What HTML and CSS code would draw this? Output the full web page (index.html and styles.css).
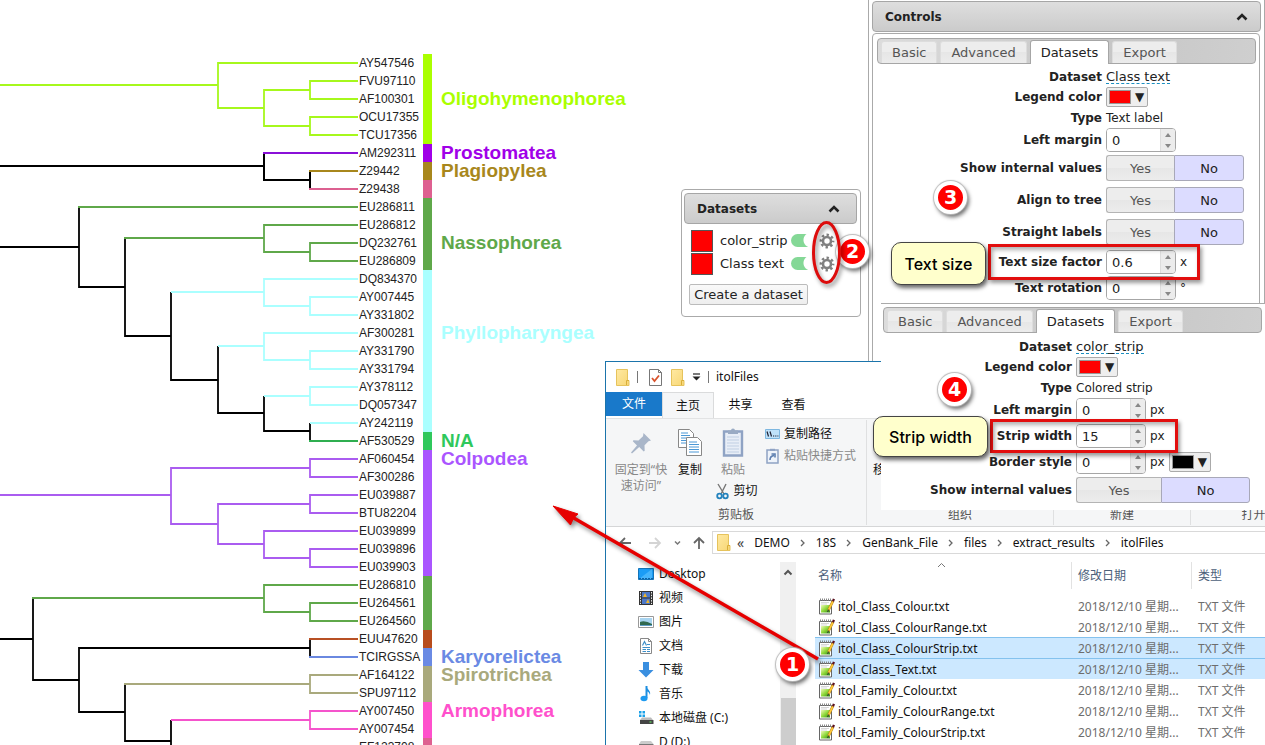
FILE: index.html
```html
<!DOCTYPE html>
<html lang="zh-CN">
<head>
<meta charset="utf-8">
<title>iTOL datasets</title>
<link rel="stylesheet" href="styles.css">
</head>
<body>
<svg class="defs" aria-hidden="true">
  <defs>
    <linearGradient id="gold" x1="0" y1="0" x2="1" y2="1"><stop offset="0" stop-color="#ffe9a2"/><stop offset="1" stop-color="#f7d674"/></linearGradient>
    <linearGradient id="leaf" x1="0" y1="0" x2="1" y2="1"><stop offset="0" stop-color="#eefab8"/><stop offset=".5" stop-color="#8fd83a"/><stop offset="1" stop-color="#2f8f14"/></linearGradient>
    <symbol id="folder" viewBox="0 0 14 17"><path d="M.5.5h11v11h1.500v5H.5z" fill="url(#gold)" stroke="#e6c35c"/><path d="M10.500 16v-4.500h2.500" fill="none" stroke="#d9ae3a"/></symbol>
    <symbol id="gear" viewBox="0 0 16 16"><circle cx="8" cy="8" r="4" fill="none" stroke="#808080" stroke-width="2.600"/><circle cx="8" cy="8" r="6.200" fill="none" stroke="#808080" stroke-width="2.400" stroke-dasharray="2.435" stroke-dashoffset="1.218"/></symbol>
    <symbol id="note" viewBox="0 0 17 17"><path d="M1.500 2.500h12v13.500h-12z" fill="#fff" stroke="#666"/><path d="M3 7h9v7.500H3z" fill="url(#leaf)"/><path d="M2 1.500h11" stroke="#888" stroke-width="2" stroke-dasharray="1 1"/><path d="M3 4.500h8M3 6h6" stroke="#ccc" stroke-width=".8"/><path d="M15 3l-4.500 9" stroke="#a87a10" stroke-width="2.600"/><path d="M15 3l-4.500 9" stroke="#ffc83a" stroke-width="1.700"/><path d="M15.900.8l-.9 2.500" stroke="#5a0f1c" stroke-width="2.200"/><path d="M10.600 11.500l-1 2.500" stroke="#333"/></symbol>
    <symbol id="chev" viewBox="0 0 12 8"><path d="M1.500 6.500L6 2l4.500 4.500" fill="none" stroke="#222" stroke-width="2.600"/></symbol>
    <symbol id="next" viewBox="0 0 6 8"><path d="M1 1l3 3-3 3" fill="none" stroke="#666" stroke-width="1.300"/></symbol>
  </defs>
</svg>
<main class="canvas">

  <section class="tree" aria-label="Phylogenetic tree">
    <svg class="branches" viewBox="0 1 358 702" width="358" height="702">
      <g fill="none" stroke-width="1.800">
        <g stroke="#000">
          <path stroke-width="2" d="M0 113H264M264 100V127H310M310 118V136"/>
          <path d="M0 194H79M79 154V234H125M125 185V283H171M171 239V327H218M218 293V360H264M264 343V378H310M310 370V388"/>
          <path d="M0 586H33M33 545V627H79M310 595H79V659H125M310 586V604M125 631V688H171M171 667V702"/>
        </g>
        <path stroke="#a6f81c" d="M0 32H218M358 10H218V55H264M310 37H264V73H310M358 28H310V46H358M358 64H310V82H358"/>
        <path stroke="#8a10d8" d="M263 100H358"/>
        <path stroke="#a8871c" d="M309 118H358"/>
        <path stroke="#dc6090" d="M309 136H358"/>
        <path stroke="#5fa84a" d="M78 154H358M124 185H264M358 172H264V199H310M358 190H310V208H358M32 545H264M358 532H264V559H310M358 550H310V568H358"/>
        <path stroke="#aaffff" d="M171 239H264M358 226H264V253H310M358 244H310V262H358M218 293H264M358 280H264V307H310M358 298H310V316H358M264 343H310M358 334H310V352H358M310 370H358"/>
        <path stroke="#2fae50" d="M309 388H358"/>
        <path stroke="#aa5cf0" d="M0 442H171M310 415H171V471H218M358 406H310V424H358M310 451H218V491H264M358 442H310V460H358M358 478H264V505H310M358 496H310V514H358"/>
        <path stroke="#b85024" d="M309 586H358"/>
        <path stroke="#6a88e0" d="M309 604H358"/>
        <path stroke="#a9a97c" d="M124 631H310M358 622H310V640H358"/>
        <path stroke="#f554cc" d="M171 667H310M358 658H310V676H358"/>
      </g>
    </svg>
    <ul class="leaves">
      <li>AY547546</li><li>FVU97110</li><li>AF100301</li><li>OCU17355</li><li>TCU17356</li><li>AM292311</li><li>Z29442</li><li>Z29438</li><li>EU286811</li><li>EU286812</li><li>DQ232761</li><li>EU286809</li><li>DQ834370</li><li>AY007445</li><li>AY331802</li><li>AF300281</li><li>AY331790</li><li>AY331794</li><li>AY378112</li><li>DQ057347</li><li>AY242119</li><li>AF530529</li><li>AF060454</li><li>AF300286</li><li>EU039887</li><li>BTU82204</li><li>EU039899</li><li>EU039896</li><li>EU039903</li><li>EU286810</li><li>EU264561</li><li>EU264560</li><li>EUU47620</li><li>TCIRGSSA</li><li>AF164122</li><li>SPU97112</li><li>AY007450</li><li>AY007454</li><li>EF123708</li>
    </ul>
    <ul class="classes">
      <li class="n5 lime">Oligohymenophorea</li>
      <li class="n1 violet">Prostomatea</li>
      <li class="n1 ochre">Plagiopylea</li>
      <li class="n1 rose"></li>
      <li class="n4 green"><span class="half-down">Nassophorea</span></li>
      <li class="n9 cyan"><span class="half-up">Phyllopharyngea</span></li>
      <li class="n1 emerald">N/A</li>
      <li class="n7 purple"><span class="first">Colpodea</span></li>
      <li class="n3 green"></li>
      <li class="n1 rust"></li>
      <li class="n1 blue">Karyorelictea</li>
      <li class="n2 khaki"><span class="first">Spirotrichea</span></li>
      <li class="n2 pink"><span class="first">Armophorea</span></li>
      <li class="n1 rose"></li>
    </ul>
  </section>

  <section class="controls" aria-label="Controls">
    <header class="bar"><h2>Controls</h2><svg class="caret"><use href="#chev"/></svg></header>
    <div class="controls-body">
      <nav class="tabs"><button>Basic</button><button>Advanced</button><button class="active">Datasets</button><button>Export</button></nav>
      <form class="form">
        <div class="row"><span class="label">Dataset</span><a href="#" class="edit">Class text</a></div>
        <div class="row low"><span class="label">Legend color</span><button type="button" class="picker" aria-label="Legend color"><i class="red"></i>▼</button></div>
        <div class="row low type"><span class="label">Type</span><span>Text label</span></div>
        <div class="row spin"><label for="lm1">Left margin</label><span class="spinner"><input id="lm1" value="0"><span class="arrows"><button type="button" class="up" aria-label="Up"></button><button type="button" class="down" aria-label="Down"></button></span></span></div>
        <div class="row tog"><span class="label">Show internal values</span><span class="choice"><button type="button">Yes</button><button type="button" class="on">No</button></span></div>
        <div class="row tog"><span class="label">Align to tree</span><span class="choice"><button type="button">Yes</button><button type="button" class="on">No</button></span></div>
        <div class="row tog"><span class="label">Straight labels</span><span class="choice"><button type="button">Yes</button><button type="button" class="on">No</button></span></div>
        <div class="row spin"><label for="tsf">Text size factor</label><span class="spinner"><input id="tsf" value="0.6"><span class="arrows"><button type="button" class="up" aria-label="Up"></button><button type="button" class="down" aria-label="Down"></button></span></span><span>x</span></div>
        <div class="row spin"><label for="rot">Text rotation</label><span class="spinner"><input id="rot" value="0"><span class="arrows"><button type="button" class="up" aria-label="Up"></button><button type="button" class="down" aria-label="Down"></button></span></span><span>°</span></div>
      </form>
    </div>
  </section>

  <section class="datasets" aria-label="Datasets">
    <header class="bar"><h2>Datasets</h2><svg class="caret"><use href="#chev"/></svg></header>
    <ul>
      <li><i class="swatch"></i><label for="d1">color_strip</label><input type="checkbox" id="d1" checked><button aria-label="Settings"><svg><use href="#gear"/></svg></button></li>
      <li><i class="swatch"></i><label for="d2">Class text</label><input type="checkbox" id="d2" checked><button aria-label="Settings"><svg><use href="#gear"/></svg></button></li>
    </ul>
    <button class="create">Create a dataset</button>
  </section>

  <section class="explorer" aria-label="itolFiles">
    <header class="title">
      <svg width="14" height="17"><use href="#folder"/></svg><i class="bar-sep"></i>
      <svg class="check" width="13" height="17" viewBox="0 0 13 17"><path d="M.5.5h9l3 3v13H.5z" fill="#fff" stroke="#777"/><path d="M9.500.5v3h3" fill="none" stroke="#777"/><path d="M3 9l2.500 3L10 6.500" fill="none" stroke="#d9532c" stroke-width="1.800"/></svg>
      <svg width="14" height="17"><use href="#folder"/></svg>
      <svg width="9" height="8" viewBox="0 0 9 8"><path d="M1 1h7" stroke="#222" stroke-width="1.200"/><path d="M.5 3.500h8l-4 4z" fill="#222"/></svg>
      <i class="bar-sep"></i><span>itolFiles</span>
    </header>
    <nav class="menu"><button class="file">文件</button><button class="home">主页</button><button>共享</button><button>查看</button></nav>
    <div class="ribbon">
      <div class="group clip">
        <div class="tools">
          <button class="tool off pin"><svg width="22" height="34" viewBox="0 0 22 34"><path d="M13.500 7L21 14.500l-2.500.8-4 4 .2 5.500-1 .6-4.500-4.500L2 27.500 1 26.500l6-7-4.200-4.200.6-1 5.100.2 4.500-4.200z" fill="#a9b6c9"/></svg><span>固定到“快<br>速访问”</span></button>
          <button class="tool copy"><svg width="26" height="34" viewBox="0 0 26 34"><g fill="#fff" stroke="#888"><path d="M1.500 3.500h11l4 4v14h-15z"/><path d="M9.500 11.500h11l4 4v14h-15z"/></g><path d="M4 7h7M4 9.500h9M4 12h5M4 14.500h5M4 17h5M12 16h8M12 18.500h10M12 21h10M12 23.500h10M12 26h10" stroke="#4b98d6"/></svg>复制</button>
          <div class="stack">
            <button class="tool off"><svg width="22" height="34" viewBox="0 0 22 34"><path d="M2 5.500h18v24H2z" fill="#e8eef7" stroke="#8fa3c4" stroke-width="2.400"/><path d="M6 8V4.500h3a2 2 0 014 0h3V8z" fill="#9aabc4"/><path d="M5 11h12M5 14h12M5 17h12M5 20h12M5 23h12M5 26h12" stroke="#c0cfe3"/></svg>粘贴</button>
            <button class="small"><svg width="13" height="17" viewBox="0 0 13 17"><path d="M2 1l6 10M10 1L5 11" stroke="#777" stroke-width="1.400"/><circle cx="3.500" cy="13" r="2.300" fill="none" stroke="#2382bd" stroke-width="1.800"/><circle cx="9.500" cy="13" r="2.300" fill="none" stroke="#2382bd" stroke-width="1.800"/></svg>剪切</button>
          </div>
          <div class="stack paths">
            <button class="small"><svg width="15" height="10" viewBox="0 0 15 10"><path d="M.5.5h14v9H.5z" fill="#bfe2fa" stroke="#7db7e0"/><path d="M2 2.500l1.500 5M5 2.500l1.500 5M8 7h1.200M10.200 7h1.200M12.400 7h1" stroke="#223" stroke-width="1.200"/></svg>复制路径</button>
            <button class="small off"><svg width="15" height="16" viewBox="0 0 15 16"><path d="M2 2h11v13H2z" fill="#eef3fa" stroke="#8fa3c4" stroke-width="1.500"/><path d="M5 .8h5v2H5z" fill="#8fa3c4"/><path d="M5 12q0-4 4-4.500M6.500 6H10v3.500" fill="none" stroke="#5d7fb0" stroke-width="1.600"/></svg>粘贴快捷方式</button>
          </div>
        </div>
        <span class="caption">剪贴板</span>
      </div>
      <div class="group org"><div class="tools"><span class="move">移动到</span></div><span class="caption">组织</span></div>
      <div class="group new"><span class="caption">新建</span></div>
      <div class="group open"><span class="caption">打开</span></div>
    </div>
    <div class="address">
      <svg class="nav-arrows" width="88" height="14" viewBox="0 0 88 14"><g fill="none" stroke-width="1.800"><path d="M13 7H2M7 2L2 7l5 5" stroke="#666"/><path d="M31 7h11M37 2l5 5-5 5" stroke="#d4d4d4"/><path d="M57 5.500l2.500 2.500L62 5.500" stroke="#777" stroke-width="1.500"/><path d="M81 13V2M76 7l5-5 5 5" stroke="#666"/></g></svg>
      <div class="path"><svg width="14" height="17"><use href="#folder"/></svg><span class="back">«</span><a href="#">DEMO</a><svg class="next"><use href="#next"/></svg><a href="#">18S</a><svg class="next"><use href="#next"/></svg><a href="#">GenBank_File</a><svg class="next"><use href="#next"/></svg><a href="#">files</a><svg class="next"><use href="#next"/></svg><a href="#">extract_results</a><svg class="next"><use href="#next"/></svg><a href="#">itolFiles</a></div>
    </div>
    <div class="content">
      <ul class="places">
        <li><svg viewBox="0 0 16 16"><path d="M.5 2.500h15v11H.5z" fill="#1b9cf5" stroke="#1474b8"/><path d="M1 13L14 3v10z" fill="#45b4fb"/><path d="M1 12.500h14" stroke="#0d62a5" stroke-dasharray="2 1"/></svg>Desktop</li>
        <li><svg viewBox="0 0 16 16"><path d="M1 1h14v14H1z" fill="#333"/><path d="M4 2h8v5.500H4z" fill="#4c78c8"/><path d="M4 8.500h8V14H4z" fill="#4c78c8"/><path d="M5 7l2-4 2 4zM8 13l2-4 1.500 4z" fill="#f0b428"/><path d="M2.500 2v12M13.500 2v12" stroke="#eee" stroke-dasharray="1.500 1.200"/></svg>视频</li>
        <li><svg viewBox="0 0 16 16"><path d="M.5 2.500h15v11H.5z" fill="#fff" stroke="#999"/><path d="M2 4h12v8H2z" fill="#a8d4f0"/><path d="M2 8q5-2 12 2v2H2z" fill="#30694f"/><path d="M2 11h12v1H2z" fill="#5e9cc6"/></svg>图片</li>
        <li><svg viewBox="0 0 16 16"><path d="M2.500.5h8l3 3v12h-11z" fill="#fff" stroke="#888"/><path d="M10.500.5v3h3" fill="none" stroke="#888"/><path d="M4.500 7.500l2-4 2 4M9 6.500h3M4.500 9.500h7.500M4.500 11.500h3.500M9 11.500h3M4.500 13.500h3.500M9 13.500h3" stroke="#3d8fc9" fill="none" stroke-width="1.200"/></svg>文档</li>
        <li><svg viewBox="0 0 16 16"><path d="M5 0h6v8h4.500L8 15.500.5 8H5z" fill="#3a8fe0"/></svg>下载</li>
        <li><svg viewBox="0 0 16 16"><path d="M8.500 0v12" stroke="#1e8fe0" stroke-width="2"/><ellipse cx="6" cy="12.500" rx="3.500" ry="2.800" fill="#1e9af0"/><path d="M8 0c1 3.500 5 4 4 9-.5-2.500-2-3.500-4-4z" fill="#1e8fe0"/></svg>音乐</li>
        <li><svg viewBox="0 0 16 16"><path d="M1 1h2.500v2.500H1zM4.500 1H7v2.500H4.500zM1 4.500h2.500V7H1zM4.500 4.500H7V7H4.500z" fill="#1ba1e8"/><path d="M4 7.500h9l2 2.500H2z" fill="#bbb"/><path d="M2 10h13.500v4H2z" fill="#444"/><path d="M11.500 12h2" stroke="#6f6"/></svg>本地磁盘 (C:)</li>
        <li><svg viewBox="0 0 16 16"><path d="M3 7h10l2.500 3H1z" fill="#ccc"/><path d="M1 10h14.500v4H1z" fill="#777"/></svg>D (D:)</li>
      </ul>
      <div class="scroll"><svg width="10" height="7" viewBox="0 0 10 7"><path d="M1.500 5.500L5 2l3.500 3.500" fill="none" stroke="#555" stroke-width="2"/></svg><i></i></div>
      <table class="files">
        <thead><tr><th class="name"><span>名称</span><svg class="sort" width="9" height="6" viewBox="0 0 9 6"><path d="M1 5l3.500-3.500L8 5" fill="none" stroke="#777"/></svg></th><th class="date"><span>修改日期</span></th><th><span>类型</span></th></tr></thead>
        <tbody>
          <tr><td><svg><use href="#note"/></svg>itol_Class_Colour.txt</td><td>2018/12/10 星期...</td><td>TXT 文件</td></tr>
          <tr><td><svg><use href="#note"/></svg>itol_Class_ColourRange.txt</td><td>2018/12/10 星期...</td><td>TXT 文件</td></tr>
          <tr class="sel"><td><svg><use href="#note"/></svg>itol_Class_ColourStrip.txt</td><td>2018/12/10 星期...</td><td>TXT 文件</td></tr>
          <tr class="sel"><td><svg><use href="#note"/></svg>itol_Class_Text.txt</td><td>2018/12/10 星期...</td><td>TXT 文件</td></tr>
          <tr><td><svg><use href="#note"/></svg>itol_Family_Colour.txt</td><td>2018/12/10 星期...</td><td>TXT 文件</td></tr>
          <tr><td><svg><use href="#note"/></svg>itol_Family_ColourRange.txt</td><td>2018/12/10 星期...</td><td>TXT 文件</td></tr>
          <tr><td><svg><use href="#note"/></svg>itol_Family_ColourStrip.txt</td><td>2018/12/10 星期...</td><td>TXT 文件</td></tr>
          <tr><td><svg><use href="#note"/></svg></td><td></td><td></td></tr>
        </tbody>
      </table>
    </div>
  </section>

  <section class="strip-panel" aria-label="Strip settings">
    <nav class="tabs"><button>Basic</button><button>Advanced</button><button class="active">Datasets</button><button>Export</button></nav>
    <form class="form">
      <div class="row"><span class="label">Dataset</span><a href="#" class="edit">color_strip</a></div>
      <div class="row low"><span class="label">Legend color</span><button type="button" class="picker" aria-label="Legend color"><i class="red"></i>▼</button></div>
      <div class="row low type"><span class="label">Type</span><span>Colored strip</span></div>
      <div class="row spin"><label for="lm2">Left margin</label><span class="spinner"><input id="lm2" value="0"><span class="arrows"><button type="button" class="up" aria-label="Up"></button><button type="button" class="down" aria-label="Down"></button></span></span><span>px</span></div>
      <div class="row spin"><label for="sw">Strip width</label><span class="spinner"><input id="sw" value="15"><span class="arrows"><button type="button" class="up" aria-label="Up"></button><button type="button" class="down" aria-label="Down"></button></span></span><span>px</span></div>
      <div class="row spin"><label for="bs">Border style</label><span class="spinner"><input id="bs" value="0"><span class="arrows"><button type="button" class="up" aria-label="Up"></button><button type="button" class="down" aria-label="Down"></button></span></span><span>px</span><button type="button" class="picker" aria-label="Border color"><i class="black"></i>▼</button></div>
      <div class="row tog"><span class="label">Show internal values</span><span class="choice wide"><button type="button">Yes</button><button type="button" class="on">No</button></span></div>
    </form>
  </section>

  <b class="badge b2">2</b>
  <svg class="marks" width="1265" height="745" viewBox="0 0 1265 745">
    <path d="M572 517L818 659" stroke="#e60000" stroke-width="3.500"/>
    <path d="M553 506l25 8-4.500 4-3 7z" fill="#e60000" stroke="#e60000"/>
    <ellipse cx="826.500" cy="252.500" rx="13" ry="30" fill="none" stroke="#dd0c0c" stroke-width="3"/>
  </svg>
  <b class="badge b1">1</b>
  <b class="badge b3">3</b>
  <b class="badge b4">4</b>
  <i class="frame f1"></i>
  <i class="frame f2"></i>
  <span class="callout c1">Text size</span>
  <span class="callout c2">Strip width</span>
</main>
</body>
</html>
```
FILE: styles.css
```css
* { box-sizing: border-box; }
body { margin: 0; background: #fff; color: #222; font: 12px/1 "DejaVu Sans", Verdana, sans-serif; }
ul { list-style: none; margin: 0; padding: 0; }
h2 { margin: 0; font-size: 12px; }
button, input { font: inherit; color: inherit; margin: 0; }
button { border: 0; padding: 0; background: none; }
a { color: inherit; text-decoration: none; }
.defs { position: absolute; width: 0; height: 0; }
.canvas { position: relative; height: 100vh; min-height: 745px; overflow: hidden; }

/* tree */
.tree { display: flex; padding-top: 54px; font-family: "Liberation Sans", Arial, sans-serif; }
.branches { flex: none; }
.leaves { width: 65px; padding-left: 1px; color: #222; white-space: nowrap; }
.leaves li { height: 18px; line-height: 18px; font-size: 12px; }
.classes { font-size: 19px; font-weight: bold; }
.classes li { display: flex; align-items: center; border-left: 9px solid; padding-left: 9px; height: 18px; line-height: 18px; white-space: nowrap; }
.classes .n2 { height: 36px; }
.classes .n3 { height: 54px; }
.classes .n4 { height: 72px; }
.classes .n5 { height: 90px; }
.classes .n7 { height: 126px; }
.classes .n9 { height: 162px; }
.half-up { padding-bottom: 36px; }
.half-down { padding-top: 18px; }
.first { align-self: flex-start; }
.lime { color: #aaff00; }
.violet { color: #a000e8; }
.ochre { color: #a8871c; }
.rose { color: #de6090; }
.green { color: #5fa84a; }
.cyan { color: #aaffff; }
.emerald { color: #2fc85c; }
.purple { color: #aa55ff; }
.rust { color: #b84c1c; }
.blue { color: #6a8ae4; }
.khaki { color: #a9a97c; }
.pink { color: #ff50cc; }

/* grey panels */
.bar { display: flex; align-items: center; justify-content: space-between; height: 31px; padding: 0 12px; border: 1px solid #a6a6a6; border-radius: 4px; background: linear-gradient(#dedede, #cbcbcb); }
.caret { width: 12px; height: 8px; }
.controls { position: absolute; left: 868px; right: 0; top: 0; height: 370px; padding: 1px 3px 0; border: solid #aaa; border-width: 0 1px; background: #fff; }
.controls .bar { margin-bottom: 1px; }
.controls-body { margin-right: 1px; height: 340px; padding: 4px 3px 4px 4px; border: 1px solid #aaa; border-radius: 4px; }
.tabs { display: flex; align-items: flex-end; gap: 3px; height: 26px; padding-left: 3px; border: 1px solid #a6a6a6; border-radius: 4px; background: linear-gradient(100deg, #dcdcdc, #c6c6c6 60%, #cfcfcf); font-size: 13px; }
.tabs button { height: 22px; padding: 0 10px; border: 1px solid #ddd; border-bottom: 0; border-radius: 3px 3px 0 0; background: linear-gradient(#ededed 50%, #e6e6e6 50%, #ececec); color: #555; }
.tabs .active { height: 24px; margin-bottom: -1px; border-color: #a6a6a6; background: #fff; color: #222; }
.form { padding-top: 2px; }
.row { display: grid; grid-template-columns: 225px auto auto auto; justify-content: start; align-items: center; gap: 4px; height: 21px; }
.row > :first-child { text-align: right; font-weight: bold; white-space: nowrap; }
.low { height: 20px; }
.type { padding-top: 1px; }
.spin { height: 26px; }
.tog { height: 32px; padding-bottom: 2px; }
.edit { border-bottom: 1px dashed #1b8fc0; font-size: 13px; }
.picker { display: flex; align-items: center; gap: 4px; width: 42px; height: 20px; padding: 0 2px; border: 1px solid #aaa; border-radius: 2px; background: #eee; }
.picker i { width: 22px; height: 14px; border: 1px solid #999; }
.red { background: #f00; }
.black { background: #000; }
.spinner { display: flex; width: 70px; height: 24px; border: 1px solid #a6a6a6; border-radius: 4px; overflow: hidden; }
.spinner input { flex: 1; min-width: 0; padding: 0 5px; border: 0; background: #fff; font-size: 13px; }
.arrows { display: flex; flex-direction: column; justify-content: space-around; align-items: center; width: 15px; border-left: 1px solid #ddd; background: #ececec; }
.arrows button { border: 3px solid transparent; }
.arrows .up { border-top: 0; border-bottom: 4px solid #888; }
.arrows .down { border-bottom: 0; border-top: 4px solid #888; }
.choice { display: grid; grid-template-columns: 68px 70px; height: 26px; border-radius: 3px; font-size: 13px; }
.wide { grid-template-columns: 85px 89px; }
.choice button { border: 1px solid #b4b4b4; border-right: 0; border-radius: 3px 0 0 3px; background: linear-gradient(#ededed 50%, #e6e6e6 50%, #ececec); color: #555; }
.choice .on { border: 1px solid #a8a8b8; border-radius: 0 3px 3px 0; background: #dcdcff; color: #222; }
.strip-panel { position: absolute; left: 881px; right: 0; top: 303px; height: 207px; padding: 3px 3px 0 2px; border-top: 1px solid #aaa; background: #fff; }
.strip-panel .row { grid-template-columns: 189px auto auto auto; }
.strip-panel .form { padding-top: 3px; }

/* datasets box */
.datasets { position: absolute; left: 681px; top: 189px; width: 180px; height: 128px; padding: 3px 3px 0 2px; border: 1px solid #aaa; border-radius: 4px; background: #fff; font-size: 13px; }
.datasets .bar { padding-right: 16px; }
.datasets ul { padding: 5px 0 0 7px; }
.datasets li { display: grid; grid-template-columns: 22px 64px 26px 16px; gap: 7px; align-items: center; height: 23px; white-space: nowrap; }
.datasets li input { appearance: none; width: 24px; height: 13px; margin: 0; border-radius: 7px; background: radial-gradient(circle at 20px 6px, #fff 7px, #84d896 8px); }
.datasets li svg { display: block; width: 16px; height: 16px; margin-left: -5px; }
.swatch { width: 22px; height: 22px; border: 1px solid #555; background: #f00; }
.create { margin: 9px 0 0 5px; width: 119px; height: 21px; border: 1px solid #bbb; border-radius: 2px; background: linear-gradient(#f9f9f9, #eee); }

/* file explorer */
.explorer { position: absolute; left: 605px; right: 0; top: 361px; bottom: 0; display: flex; flex-direction: column; overflow: hidden; border: solid #1b74ab; border-width: 1px 0 0 1px; background: #fff; color: #111; font: 12px/16px "Noto Sans", "Noto Sans CJK SC", sans-serif; }
.title { display: flex; align-items: center; gap: 7px; height: 30px; padding-left: 10px; }
.title .check { margin: 0 2px 0 4px; }
.bar-sep { width: 1px; height: 12px; background: #777; }
.menu { display: flex; height: 26px; }
.menu button { width: 53px; height: 26px; }
.menu .file { width: 56px; height: 24px; background: #1979ca; color: #fff; }
.menu .home { width: 52px; border: 1px solid #dadbdc; border-bottom: 0; background: #f5f6f7; }
.ribbon { display: flex; height: 109px; border-top: 1px solid #e2e3e4; border-bottom: 1px solid #d5d6d7; background: #f5f6f7; }
.group { display: flex; flex-direction: column; flex: none; margin: 1px 0; border-right: 1px solid #dfe0e1; }
.clip { width: 261px; }
.org { width: 187px; }
.new { width: 137px; }
.open { width: 126px; }
.caption { margin-top: auto; padding-bottom: 2px; text-align: center; color: #555; }
.tools { display: flex; }
.tool { display: flex; flex-direction: column; align-items: center; padding-top: 6px; line-height: 16px; }
.tool svg { margin-bottom: 2px; }
.off { color: #888; }
.pin { width: 70px; }
.copy { width: 28px; margin-right: 2px; }
.stack { display: flex; flex-direction: column; align-items: center; width: 54px; }
.paths { align-items: flex-start; width: auto; padding: 4px 0 0 5px; gap: 2px; }
.small { display: flex; align-items: center; gap: 4px; height: 20px; white-space: nowrap; }
.stack .tool + .small { margin: 3px 0 0 8px; }
.move { padding: 42px 0 0 6px; }
.address { display: flex; align-items: center; padding-top: 4px; }
.nav-arrows { flex: none; margin: 0 6px 0 12px; }
.path { display: flex; flex: 1; align-items: center; gap: 10px; height: 23px; padding-left: 4px; border: 1px solid #d9d9d9; border-right: 0; }
.path .back { margin: 0 0 0 -4px; font-size: 14px; color: #444; }
.next { width: 6px; height: 8px; }
.content { display: flex; flex: 1; min-height: 0; padding-top: 8px; }
.places { width: 174px; padding-left: 32px; }
.places li { display: flex; align-items: center; gap: 5px; height: 24px; }
.places svg { width: 16px; height: 16px; }
.scroll { display: flex; flex-direction: column; align-items: center; width: 16px; margin-right: 19px; padding-top: 7px; background: #f0f0f0; }
.scroll i { width: 15px; margin-top: 122px; flex: 1; background: #cdcdcd; }
.files { flex: 1; align-self: flex-start; table-layout: fixed; width: 100%; border-collapse: collapse; }
.files th { position: relative; height: 33px; padding: 0 0 6px; font-weight: normal; text-align: left; color: #4c607a; }
.files th span { display: block; padding: 6px 0 5px 6px; border-left: 1px solid #e2e2e2; }
.files .name { width: 256px; }
.files .name span { padding-left: 3px; border: 0; }
.files .date { width: 120px; }
.sort { position: absolute; left: 122px; top: 0; }
.files td { height: 21px; padding: 2px 0 0 7px; color: #6d6d6d; line-height: 17px; white-space: nowrap; }
.files td:first-child { padding-left: 3px; color: #111; }
.files td svg { width: 17px; height: 17px; margin: -2px 3px 0 0; vertical-align: middle; }
.sel td { background: #cce8ff; box-shadow: inset 0 1px #84c2ee; }

/* annotations */
.marks { position: absolute; left: 0; top: 0; filter: drop-shadow(2px 3px 2px rgba(0, 0, 0, .45)); pointer-events: none; }
.badge { position: absolute; width: 33px; height: 33px; border: 4px solid #fff; border-radius: 50%; background: #f00; color: #fff; text-align: center; font-size: 19px; line-height: 25px; box-shadow: 0 0 1px 1px #bbb, 2px 3px 4px rgba(0, 0, 0, .6); }
.b1 { left: 776px; top: 648px; }
.b2 { left: 836px; top: 235px; }
.b3 { left: 934px; top: 181px; }
.b4 { left: 938px; top: 373px; }
.frame { position: absolute; border: 3px solid #e20e0e; box-shadow: 2px 3px 4px rgba(0, 0, 0, .4), inset 2px 3px 4px rgba(0, 0, 0, .3); pointer-events: none; }
.f1 { left: 988px; top: 244px; width: 212px; height: 36px; }
.f2 { left: 990px; top: 419px; width: 188px; height: 34px; }
.callout { position: absolute; display: flex; align-items: center; justify-content: center; border: 1px solid #444; border-radius: 10px; background: #ffffcc; color: #000; font: 500 16px/1 Inter, sans-serif; box-shadow: 2px 3px 4px rgba(0, 0, 0, .6); }
.c1 { left: 891px; top: 242px; width: 95px; height: 43px; }
.c2 { left: 873px; top: 416px; width: 115px; height: 41px; }
```
